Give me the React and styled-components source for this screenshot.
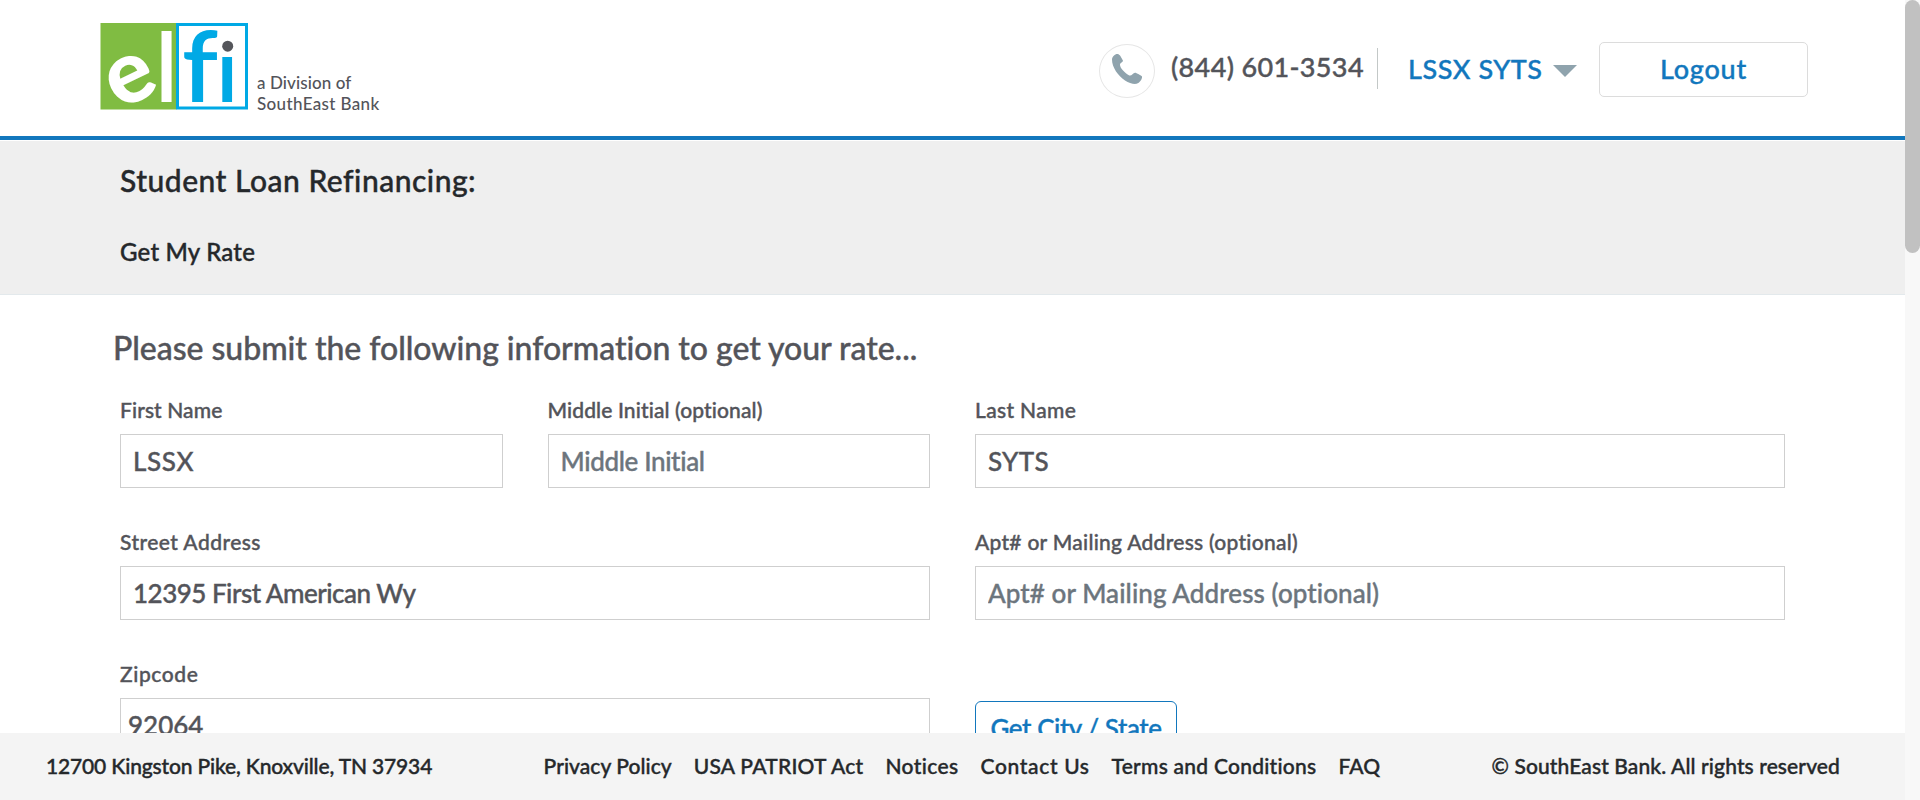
import React from "react";
import styled, { createGlobalStyle } from "styled-components";

const Global = createGlobalStyle`
  * { box-sizing: border-box; }
  body { margin: 0; background: #fff; overflow: hidden; }
  body, input, button {
    font-family: Lato, "Liberation Sans", sans-serif;
    font-weight: 500;
    font-variant-ligatures: none;
  }
`;

const Screen = styled.div`
  display: flex;
  width: 1920px;
  height: 800px;
  overflow: hidden;
  color: #53545a;
`;
const Page = styled.div`
  width: 1905px;
  height: 800px;
  display: flex;
  flex-direction: column;
`;
const ScrollTrack = styled.div`
  width: 15px;
  background: #f8f8f8;
`;
const ScrollThumb = styled.div`
  height: 253px;
  border-radius: 8px;
  background: #c1c1c1;
`;
const Text = styled.span`
  display: block;
  white-space: nowrap;
  font-size: ${(p) => p.$size}px;
  line-height: ${(p) => p.$line || p.$size * 1.25}px;
  letter-spacing: ${(p) => p.$track || 0}px;
  color: ${(p) => p.$color || "inherit"};
  -webkit-text-stroke: ${(p) => p.$stroke ?? 0.4}px currentColor;
`;
const Header = styled.header`
  height: 140px;
  flex: none;
  display: flex;
  justify-content: space-between;
  align-items: flex-start;
  padding: 23px 97px 0 100px;
  border-bottom: 4px solid #1277bd;
`;
const Brand = styled.div`
  display: flex;
  gap: 8px;
`;
const LogoMark = styled.svg`
  display: block;
  overflow: visible;
`;
const Tagline = styled.div`
  padding-top: 49px;
`;
const Account = styled.div`
  display: flex;
  align-items: flex-start;
  padding-top: 19px;
`;
const PhoneBadge = styled.div`
  width: 56px;
  height: 54px;
  margin: 2px 16px 0 0;
  border: 1px solid #e6e6e6;
  border-radius: 50%;
  display: flex;
  justify-content: center;
  padding-top: 8px;
`;
const PhoneNumber = styled.div`
  width: 207px;
  height: 41px;
  margin-top: 6px;
  border-right: 1px solid #c3c8c7;
`;
const UserMenu = styled.div`
  width: 191px;
  margin: 7px 0 0 30px;
  display: flex;
  align-items: center;
  justify-content: space-between;
  padding-right: 22px;
`;
const Arrow = styled.svg`
  margin-top: 4px;
`;
const Logout = styled.button`
  width: 209px;
  height: 55px;
  padding: 0 0 2px;
  border: 1px solid #dcdcdc;
  border-radius: 5px;
  background: #fff;
  display: flex;
  align-items: center;
  justify-content: center;
`;
const Banner = styled.section`
  flex: none;
  height: 154px;
  margin-top: 1px;
  padding: 18px 120px 0;
  background: #efefef;
  border-bottom: 1px solid #e3e9ec;
  color: #25282b;
  display: flex;
  flex-direction: column;
  gap: 36px;
`;
const Main = styled.main`
  flex: 1;
  min-height: 0;
  overflow: hidden;
  padding: 31px 120px 0;
`;
const Title = styled.h1`
  margin: 0 0 28px -7px;
  font-weight: inherit;
`;
const Grid = styled.div`
  display: grid;
  grid-template-columns: 382.5px 382.5px 810px;
  column-gap: 45px;
  row-gap: 42px;
`;
const Field = styled.label`
  display: block;
  grid-column: span ${(p) => p.$span || 1};
`;
const Input = styled.input`
  display: block;
  width: 100%;
  height: 54px;
  margin-top: 12px;
  padding: 0 ${(p) => (p.$tight ? 7 : 12)}px 1px;
  border: 1px solid #cfcfcf;
  border-radius: 0;
  background: #fff;
  color: #53545a;
  font-size: 26px;
  letter-spacing: ${(p) => p.$track || 0}px;
  -webkit-text-stroke: 0.4px currentColor;
  &::placeholder { color: #6c757d; opacity: 1; }
`;
const LookupButton = styled.button`
  width: 202px;
  height: 54px;
  margin-top: 39px;
  padding: 0;
  border: 1px solid #1277bd;
  border-radius: 6px;
  background: #fff;
  display: flex;
  align-items: center;
  justify-content: center;
`;
const Footer = styled.footer`
  flex: none;
  height: 67px;
  background: #f4f4f4;
  color: #25282b;
  display: flex;
  align-items: center;
  justify-content: space-between;
  padding: 0 65px 0 46px;
`;
const FooterLinks = styled.nav`
  display: flex;
  gap: 22px;
`;

function Logo() {
  return (
    <LogoMark width="149" height="87" viewBox="100 23 149 87" fontFamily="Lato" fontWeight="700">
      <rect x="100.5" y="23" width="76" height="86.5" fill="#80bc42" />
      <rect x="177.5" y="24.5" width="69" height="83.5" fill="#fff" stroke="#00a9e5" strokeWidth="3" />
      <text fontSize="88" fill="#fff" fontWeight="900" textAnchor="middle" transform="translate(130.6 80) rotate(-26)" y="22.5">e</text>
      <text fontSize="95" fill="#fff" transform="translate(156.5 102) scale(0.85 1)">l</text>
      <text fontSize="89" fill="#00a9e5" transform="translate(217.3 102) scale(0.88 1)">i</text>
      <rect x="219" y="30" width="18" height="25" fill="#fff" />
      <circle cx="227.7" cy="46.2" r="5.5" fill="#55565b" />
      <text fontSize="96" fill="#00a9e5" fontWeight="600" transform="translate(182 102) scale(1.06 1.02)">f</text>
    </LogoMark>
  );
}

const PhoneIcon = () => (
  <svg width="32" height="32" viewBox="0 0 32 32" fill="#8fa3ad">
    <path d="M1 6.5C1 3.5 4 1 6.3 1C8.5 1 9.5 3 12 7.7C12 8.7 10 9.5 9 11C8.5 15 14 20 18.3 22.4C20.5 23.2 22 20 24 19.7C25 19.6 30.5 22.5 31 23.5C31.5 26 28.5 30 25.7 30.8C22 31.3 18 30 14 27.5C7 22.5 1 14.5 1 6.5Z" />
  </svg>
);

const LINKS = [
  { label: "Privacy Policy", track: 0.05 },
  { label: "USA PATRIOT Act", track: 0.25 },
  { label: "Notices", track: 0.4 },
  { label: "Contact Us", track: 0.65 },
  { label: "Terms and Conditions", track: 0.25 },
  { label: "FAQ", track: 0.1 },
];

function FormField({ label, labelTrack, span, ...input }) {
  return (
    <Field $span={span}>
      <Text $size={21} $line={24} $track={labelTrack}>{label}</Text>
      <Input {...input} />
    </Field>
  );
}

export default function App() {
  return (
    <Screen>
      <Global />
      <Page>
        <Header>
          <Brand>
            <Logo />
            <Tagline>
              <Text $size={17} $line={21} $track={0.1} $stroke={0}>a Division of</Text>
              <Text $size={17} $line={21} $track={0.35} $stroke={0}>SouthEast Bank</Text>
            </Tagline>
          </Brand>
          <Account>
            <PhoneBadge><PhoneIcon /></PhoneBadge>
            <PhoneNumber><Text $size={27} $line={38} $track={0.35}>(844) 601-3534</Text></PhoneNumber>
            <UserMenu>
              <Text $size={27} $line={39} $color="#1277bd" $track={0.55}>LSSX SYTS</Text>
              <Arrow width="24" height="12" viewBox="0 0 24 12"><path d="M0 0H24L12 12Z" fill="#8fa3ad" /></Arrow>
            </UserMenu>
            <Logout><Text $size={27} $color="#1277bd" $track={0.8}>Logout</Text></Logout>
          </Account>
        </Header>
        <Banner>
          <Text $size={30} $line={42} $track={0.5}>Student Loan Refinancing:</Text>
          <Text $size={24} $line={30} $track={0.2}>Get My Rate</Text>
        </Banner>
        <Main>
          <Title>
            <Text $size={32} $line={44} $track={-0.04}>Please submit the following information to get your rate...</Text>
          </Title>
          <Grid>
            <FormField label="First Name" labelTrack={0.1} defaultValue="LSSX" $track={0.6} />
            <FormField label="Middle Initial (optional)" labelTrack={0.12} placeholder="Middle Initial" $track={-0.36} />
            <FormField label="Last Name" labelTrack={0.35} defaultValue="SYTS" $track={0.3} />
            <FormField span={2} label="Street Address" labelTrack={0.45} defaultValue="12395 First American Wy" $track={-0.5} />
            <FormField label="Apt# or Mailing Address (optional)" labelTrack={0.27} placeholder="Apt# or Mailing Address (optional)" $track={0.08} />
            <FormField span={2} label="Zipcode" labelTrack={0.6} defaultValue="92064" $tight />
            <LookupButton><Text $size={26} $color="#1277bd" $track={-0.45}>Get City / State</Text></LookupButton>
          </Grid>
        </Main>
        <Footer>
          <Text $size={21} $track={-0.15}>12700 Kingston Pike, Knoxville, TN 37934</Text>
          <FooterLinks>
            {LINKS.map((l) => <Text key={l.label} $size={21} $track={l.track}>{l.label}</Text>)}
          </FooterLinks>
          <Text $size={21} $track={0.11}>© SouthEast Bank. All rights reserved</Text>
        </Footer>
      </Page>
      <ScrollTrack><ScrollThumb /></ScrollTrack>
    </Screen>
  );
}
